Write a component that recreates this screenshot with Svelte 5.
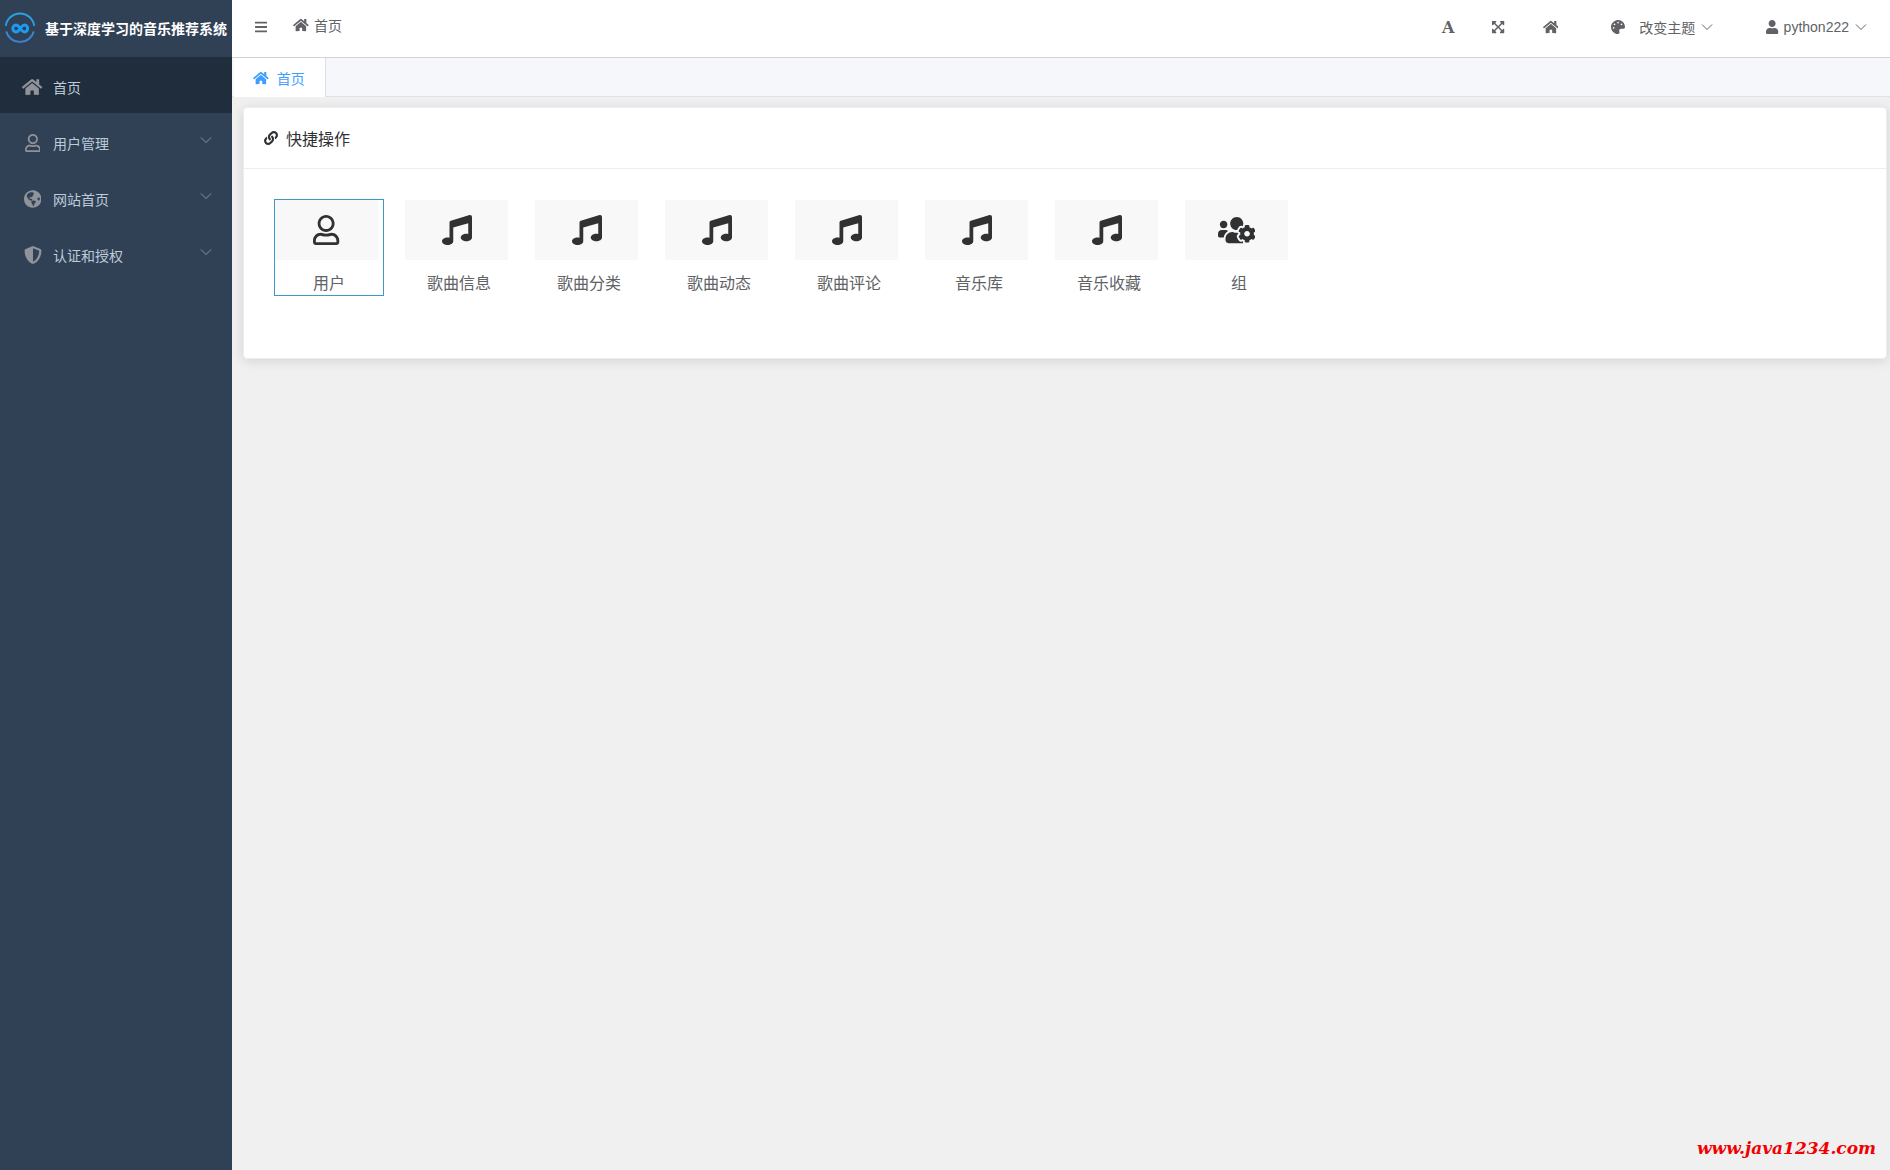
<script>
  const paths = {
    home: [576, 'M280.37 148.26L96 300.11V464a16 16 0 0 0 16 16l112.06-.29a16 16 0 0 0 15.92-16V368a16 16 0 0 1 16-16h64a16 16 0 0 1 16 16v95.64a16 16 0 0 0 16 16.05L464 480a16 16 0 0 0 16-16V300L295.67 148.26a12.19 12.19 0 0 0-15.3 0zM571.6 251.47L488 182.56V44.05a12 12 0 0 0-12-12h-56a12 12 0 0 0-12 12v72.61L318.47 43a48 48 0 0 0-61 0L4.34 251.47a12 12 0 0 0-1.6 16.9l25.5 31A12 12 0 0 0 45.15 301l235.22-193.74a12.19 12.19 0 0 1 15.3 0L530.9 301a12 12 0 0 0 16.9-1.6l25.5-31a12 12 0 0 0-1.7-16.93z'],
    person: [448, 'M313.6 304c-28.7 0-42.5 16-89.6 16-47.1 0-60.8-16-89.6-16C60.2 304 0 364.2 0 438.4V464c0 26.5 21.5 48 48 48h352c26.5 0 48-21.5 48-48v-25.6c0-74.2-60.2-134.4-134.4-134.4zM400 464H48v-25.6c0-47.6 38.8-86.4 86.4-86.4 14.6 0 38.3 16 89.6 16 51.7 0 74.9-16 89.6-16 47.6 0 86.4 38.8 86.4 86.4V464zM224 288c79.5 0 144-64.5 144-144S303.5 0 224 0 80 64.5 80 144s64.5 144 144 144zm0-240c52.9 0 96 43.1 96 96s-43.1 96-96 96-96-43.1-96-96 43.1-96 96-96z'],
    user: [448, 'M224 256c70.7 0 128-57.3 128-128S294.7 0 224 0 96 57.3 96 128s57.3 128 128 128zm89.6 32h-16.7c-22.2 10.2-46.9 16-72.9 16s-50.6-5.8-72.9-16h-16.7C60.2 288 0 348.2 0 422.4V464c0 26.5 21.5 48 48 48h352c26.5 0 48-21.5 48-48v-41.6c0-74.2-60.2-134.4-134.4-134.4z'],
    music: [512, 'M511.99 32.01c0-21.71-21.1-37.01-41.6-30.51L150.4 96c-13.3 4.2-22.4 16.5-22.4 30.5v261.42c-10.05-2.38-20.72-3.92-32-3.92-53.02 0-96 28.65-96 64s42.98 64 96 64 96-28.65 96-64V214.31l256-75.02v184.63c-10.05-2.38-20.72-3.92-32-3.92-53.02 0-96 28.65-96 64s42.98 64 96 64 96-28.65 96-64l-.01-351.99z'],
    globe: [496, 'M248 8C111 8 0 119 0 256s111 248 248 248 248-111 248-248S385 8 248 8zM82 142c28-38 64-64 106-76h64l34 34-24 30 10 22-28 12-10 40-34-6-48 20 6 30 58 4 22 24-26 30-50-16-42-36-38-72zM210 322l40-20 66 4 20 24-10 34-30 28-14 56-30 10-12-62-32-40zM388 226l38-18 22 22-2 60-30 12-36-34z'],
    shield: [512, 'M466.5 83.7l-192-80a48.15 48.15 0 0 0-36.9 0l-192 80C27.7 91.1 16 108.6 16 128c0 198.5 114.5 335.7 221.5 380.3 11.8 4.9 25.1 4.9 36.9 0C360.1 472.6 496 349.3 496 128c0-19.4-11.7-36.9-29.5-44.3zM256.1 446.3l-.1-381 175.9 73.3c-3.3 151.4-82.1 261.1-175.8 307.7z'],
    link: [512, 'M326.612 185.391c59.747 59.809 58.927 155.698.36 214.59-.11.12-.24.25-.36.37l-67.2 67.2c-59.27 59.27-155.699 59.262-214.96 0-59.27-59.26-59.27-155.7 0-214.96l37.106-37.106c9.84-9.84 26.786-3.3 27.294 10.606.648 17.722 3.826 35.527 9.69 52.721 1.986 5.822.567 12.262-3.783 16.612l-13.087 13.087c-28.026 28.026-28.905 73.66-1.155 101.96 28.024 28.579 74.086 28.749 102.325.51l67.2-67.19c28.191-28.191 28.073-73.757 0-101.83-3.701-3.694-7.429-6.564-10.341-8.569a16.037 16.037 0 0 1-6.947-12.606c-.396-10.567 3.348-21.456 11.698-29.806l21.054-21.055c5.521-5.521 14.182-6.199 20.584-1.731a152.482 152.482 0 0 1 20.522 17.197zM467.547 44.449c-59.261-59.262-155.69-59.27-214.96 0l-67.2 67.2c-.12.12-.25.25-.36.37-58.566 58.892-59.387 154.781.36 214.59a152.454 152.454 0 0 0 20.521 17.196c6.402 4.468 15.064 3.789 20.584-1.731l21.054-21.055c8.35-8.35 12.094-19.239 11.698-29.806a16.037 16.037 0 0 0-6.947-12.606c-2.912-2.005-6.64-4.875-10.341-8.569-28.073-28.073-28.191-73.639 0-101.83l67.2-67.19c28.239-28.239 74.3-28.069 102.325.51 27.75 28.3 26.872 73.934-1.155 101.96l-13.087 13.087c-4.35 4.35-5.769 10.79-3.783 16.612 5.864 17.194 9.042 34.999 9.69 52.721.509 13.906 17.454 20.446 27.294 10.606l37.106-37.106c59.271-59.259 59.271-155.699.001-214.959z'],
    palette: [512, 'M204.3 5C104.9 24.4 24.8 104.3 5.2 203.4c-37 187 131.7 326.4 258.8 306.7 41.2-6.4 61.4-54.6 42.5-91.7-23.1-45.4 9.9-98.4 60.9-98.4h79.7c35.8 0 64.8-29.6 64.9-65.3C511.5 97.1 368.1-26.9 204.3 5zM96 320c-17.7 0-32-14.3-32-32s14.3-32 32-32 32 14.3 32 32-14.3 32-32 32zm32-128c-17.7 0-32-14.3-32-32s14.3-32 32-32 32 14.3 32 32-14.3 32-32 32zm128-64c-17.7 0-32-14.3-32-32s14.3-32 32-32 32 14.3 32 32-14.3 32-32 32zm128 64c-17.7 0-32-14.3-32-32s14.3-32 32-32 32 14.3 32 32-14.3 32-32 32z'],
    bars: [448, 'M16 132h416a16 16 0 0 0 16-16V76a16 16 0 0 0-16-16H16A16 16 0 0 0 0 76v40a16 16 0 0 0 16 16zm0 160h416a16 16 0 0 0 16-16v-40a16 16 0 0 0-16-16H16a16 16 0 0 0-16 16v40a16 16 0 0 0 16 16zm0 160h416a16 16 0 0 0 16-16v-40a16 16 0 0 0-16-16H16a16 16 0 0 0-16 16v40a16 16 0 0 0 16 16z'],
    expand: [448, 'M448 344v112a23.94 23.94 0 0 1-24 24H312c-21.39 0-32.09-25.9-17-41l36.2-36.2L224 295.6 116.77 402.9 153 439c15.09 15.1 4.39 41-17 41H24a23.94 23.94 0 0 1-24-24V344c0-21.4 25.89-32.1 41-17l36.19 36.2L184.46 256 77.18 148.7 41 185c-15.1 15.1-41 4.4-41-17V56a23.94 23.94 0 0 1 24-24h112c21.39 0 32.09 25.9 17 41l-36.2 36.2L224 216.4l107.23-107.3L295 73c-15.09-15.1-4.39-41 17-41h112a23.94 23.94 0 0 1 24 24v112c0 21.4-25.89 32.1-41 17l-36.19-36.2L263.54 256l107.28 107.3L407 327.1c15.1-15.2 41-4.5 41 16.9z'],
    group: [640, 'M610.5 341.3c2.6-14.1 2.6-28.5 0-42.6l25.8-14.9c3-1.7 4.3-5.2 3.3-8.5-6.7-21.6-18.2-41.2-33.2-57.4-2.3-2.5-6-3.1-9-1.4l-25.8 14.9c-10.9-9.3-23.4-16.5-36.9-21.3v-29.8c0-3.4-2.4-6.4-5.7-7.1-22.3-5-45-4.8-66.2 0-3.3.7-5.7 3.7-5.7 7.1v29.8c-13.5 4.8-26 12-36.9 21.3l-25.8-14.9c-2.9-1.7-6.7-1.1-9 1.4-15 16.2-26.5 35.8-33.2 57.4-1 3.3.4 6.8 3.3 8.5l25.8 14.9c-2.6 14.1-2.6 28.5 0 42.6l-25.8 14.9c-3 1.7-4.3 5.2-3.3 8.5 6.7 21.6 18.2 41.1 33.2 57.4 2.3 2.5 6 3.1 9 1.4l25.8-14.9c10.9 9.3 23.4 16.5 36.9 21.3v29.8c0 3.4 2.4 6.4 5.7 7.1 22.3 5 45 4.8 66.2 0 3.3-.7 5.7-3.7 5.7-7.1v-29.8c13.5-4.8 26-12 36.9-21.3l25.8 14.9c2.9 1.7 6.7 1.1 9-1.4 15-16.2 26.5-35.8 33.2-57.4 1-3.3-.4-6.8-3.3-8.5l-25.8-14.9zM496 368.5c-26.8 0-48.5-21.8-48.5-48.5s21.8-48.5 48.5-48.5 48.5 21.8 48.5 48.5-21.7 48.5-48.5 48.5zM96 224c35.3 0 64-28.7 64-64s-28.7-64-64-64-64 28.7-64 64 28.7 64 64 64zm224 32c1.9 0 3.7-.5 5.6-.6 8.3-21.7 20.5-42.1 36.3-59.2 7.4-8 17.9-12.6 28.9-12.6 6.9 0 13.7 1.8 19.6 5.3l7.9 4.6c.8-.5 1.6-.9 2.4-1.4 7-14.6 11.2-30.8 11.2-48 0-61.9-50.1-112-112-112S208 82.1 208 144c0 61.9 50.1 112 112 112zm105.2 194.5c-2.3-1.2-4.6-2.6-6.8-3.9-8.2 4.8-15.3 9.8-27.5 9.8-10.9 0-21.4-4.6-28.9-12.6-18.3-19.8-32.3-43.9-40.2-69.6-10.7-34.5 24.9-49.7 25.8-50.3-.1-2.6-.1-5.2 0-7.8l-7.9-4.6c-3.8-2.2-7-5-9.8-8.1-3.3.2-6.5.6-9.8.6-24.6 0-47.6-6-68.5-16h-8.3C179.6 288 128 339.6 128 403.2V432c0 26.5 21.5 48 48 48h255.4c-3.7-6-6.2-12.8-6.2-20.3v-9.2zM173.1 274.6C161.5 263.1 145.6 256 128 256H64c-35.3 0-64 28.7-64 64v32c0 17.7 14.3 32 32 32h65.9c6.3-47.4 34.9-87.3 75.2-109.4z']
  };

  const menu = [
    { icon: 'home', label: '首页', active: true },
    { icon: 'person', label: '用户管理', group: true },
    { icon: 'globe', label: '网站首页', group: true },
    { icon: 'shield', label: '认证和授权', group: true }
  ];

  let selected = $state('用户');
  const shortcuts = [
    { icon: 'person', label: '用户' },
    { icon: 'music', label: '歌曲信息' },
    { icon: 'music', label: '歌曲分类' },
    { icon: 'music', label: '歌曲动态' },
    { icon: 'music', label: '歌曲评论' },
    { icon: 'music', label: '音乐库' },
    { icon: 'music', label: '音乐收藏' },
    { icon: 'group', label: '组' }
  ];
</script>

{#snippet icon(name)}
  <svg class="icon" viewBox="0 0 {paths[name][0]} 512" aria-hidden="true">
    <path fill-rule="evenodd" d={paths[name][1]} />
  </svg>
{/snippet}

{#snippet chevron()}
  <svg class="chevron" viewBox="0 0 12 12" aria-hidden="true"><path d="M1 3.5l5 5 5-5" /></svg>
{/snippet}

<div class="app">
  <aside class="sidebar">
    <div class="brand">
      <svg class="logo" viewBox="0 0 32 32" aria-hidden="true">
        <defs>
          <linearGradient id="ring" x1="0" y1="0" x2="0" y2="1">
            <stop offset="0" stop-color="#25a6e6" />
            <stop offset="1" stop-color="#3a7fd0" />
          </linearGradient>
        </defs>
        <g fill="none" stroke="url(#ring)">
          <path stroke-width="2" d="M1.8 14A14.3 14.3 0 0 1 30.2 14M2.2 19.5A14.3 14.3 0 0 0 29.8 19.5" />
          <path stroke="#1c9cf0" stroke-width="3" stroke-linecap="round" d="M15.5 17.5C14 19.5 13 20 12 20C7.8 20 7.8 13 12 13C15.500 13 17 20 20.500 20C24.700 20 24.700 13 20.500 13C19.400 13 18.500 13.600 17.500 15" />
        </g>
      </svg>
      <span>基于深度学习的音乐推荐系统</span>
    </div>
    <nav class="menu">
      {#each menu as item}
        <button class="menu-item" class:active={item.active}>
          <span class="menu-icon">{@render icon(item.icon)}</span>
          <span class="menu-label">{item.label}</span>
          {#if item.group}{@render chevron()}{/if}
        </button>
      {/each}
    </nav>
  </aside>

  <div class="content">
    <header class="topbar">
      <button class="tool" aria-label="菜单">{@render icon('bars')}</button>
      <a class="crumb" href="#home">{@render icon('home')}<span>首页</span></a>
      <div class="tools">
        <button class="tool font-tool">A</button>
        <button class="tool" aria-label="全屏">{@render icon('expand')}</button>
        <button class="tool" aria-label="主页">{@render icon('home')}</button>
        <button class="tool theme">{@render icon('palette')}<span>改变主题</span>{@render chevron()}</button>
        <button class="tool account">{@render icon('user')}<span>python222</span>{@render chevron()}</button>
      </div>
    </header>

    <div class="tabs">
      <button class="tab">{@render icon('home')}<span>首页</span></button>
    </div>

    <main>
      <section class="card">
        <h2>{@render icon('link')}<span>快捷操作</span></h2>
        <div class="shortcuts">
          {#each shortcuts as s}
            <button class="shortcut" class:selected={selected === s.label} onclick={() => (selected = s.label)}>
              <span class="tile">{@render icon(s.icon)}</span>
              <span class="caption">{s.label}</span>
            </button>
          {/each}
        </div>
      </section>
    </main>
    <a class="site" href="#site">www.java1234.com</a>
  </div>
</div>

<style>
  :global(body) {
    margin: 0;
  }
  .app {
    display: flex;
    min-height: 100vh;
    background: #f0f0f0;
    font-family: "Liberation Sans", "Noto Sans CJK SC", sans-serif;
    font-size: 14px;
    color: #606266;
  }
  button {
    margin: 0;
    padding: 0;
    border: 0;
    background: none;
    font: inherit;
    color: inherit;
    cursor: pointer;
  }
  a {
    color: inherit;
    text-decoration: none;
  }
  .icon {
    display: block;
    flex: none;
    height: 14px;
    fill: currentColor;
  }
  .chevron {
    flex: none;
    width: 12px;
    height: 12px;
    fill: none;
    stroke: currentColor;
  }
  .sidebar {
    flex: none;
    width: 232px;
    background: #304156;
  }
  .brand {
    display: flex;
    align-items: center;
    gap: 9px;
    box-sizing: border-box;
    height: 57px;
    padding: 0 0 2px 4px;
    color: #fff;
    font-weight: 700;
    white-space: nowrap;
  }
  .logo {
    flex: none;
    width: 32px;
    height: 32px;
  }
  .menu-item {
    display: flex;
    align-items: center;
    box-sizing: border-box;
    width: 100%;
    height: 56px;
    padding: 4px 20px 0;
    color: #bfcbd9;
    text-align: left;
  }
  .menu-item.active {
    background: #1f2d3d;
  }
  .menu-icon {
    display: flex;
    justify-content: center;
    width: 25px;
    margin-right: 8px;
    color: #909399;
  }
  .menu-icon .icon {
    height: 18px;
  }
  .menu-label {
    flex: 1;
  }
  .menu-item .chevron {
    margin-bottom: 6px;
    color: #909399;
  }
  .content {
    display: flex;
    flex: 1;
    flex-direction: column;
    min-width: 0;
  }
  .topbar {
    display: flex;
    align-items: center;
    box-sizing: border-box;
    height: 58px;
    padding: 0 23px 3px;
    border-bottom: 1px solid #d0d2d8;
    background: #fff;
  }
  .tool {
    display: flex;
    align-items: center;
  }
  .crumb {
    display: flex;
    align-items: center;
    gap: 5px;
    margin-left: 26px;
    padding-bottom: 4px;
  }
  .tools {
    display: flex;
    align-items: center;
    margin-left: auto;
  }
  .tools > .tool + .tool {
    margin-left: 38px;
  }
  .font-tool {
    font-family: "DejaVu Serif", serif;
    font-weight: 700;
    font-size: 16px;
  }
  .tools > .theme.tool,
  .tools > .account.tool {
    margin-left: 53px;
  }
  .theme span {
    margin: 0 6px 0 14px;
  }
  .account span {
    margin: 0 6px 0 5px;
  }
  .tabs {
    display: flex;
    box-sizing: border-box;
    height: 39px;
    padding-left: 2px;
    border-bottom: 1px solid #dfe2e8;
    background: #f5f7fa;
  }
  .tab {
    display: flex;
    align-items: center;
    gap: 8px;
    height: 39px;
    padding: 0 20px 0 19px;
    border-right: 1px solid #dcdfe6;
    background: #fff;
    color: #409eff;
  }
  main {
    flex: 1;
    padding: 10px 3px 24px 11px;
  }
  .card {
    border: 1px solid #ebeef5;
    border-radius: 4px;
    background: #fff;
    box-shadow: 0 2px 12px rgba(0, 0, 0, 0.12);
  }
  h2 {
    display: flex;
    align-items: center;
    gap: 8px;
    height: 60px;
    margin: 0;
    padding: 0 20px;
    border-bottom: 1px solid #ebeef5;
    color: #303133;
    font-size: 16px;
    font-weight: 400;
  }
  .shortcuts {
    display: flex;
    flex-wrap: wrap;
    gap: 20px;
    padding: 30px 30px 62px;
  }
  .shortcut {
    box-sizing: border-box;
    width: 110px;
    height: 97px;
    border: 1px solid transparent;
    font-size: 16px;
    line-height: 24px;
  }
  .selected {
    border-color: #4098c8;
  }
  .tile {
    display: flex;
    align-items: center;
    justify-content: center;
    height: 60px;
    margin-right: 5px;
    background: #f8f8f8;
    color: #303133;
  }
  .tile .icon {
    height: 30px;
  }
  .caption {
    display: block;
    padding-top: 12px;
  }
  .site {
    align-self: flex-end;
    padding: 0 14px 10px;
    color: #f00000;
    font: italic 700 17px/24px "DejaVu Serif", serif;
  }
</style>
